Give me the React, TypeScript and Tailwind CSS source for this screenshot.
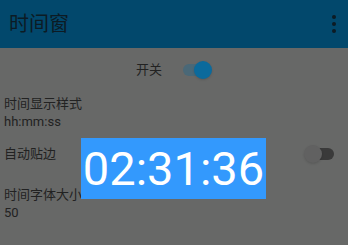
import React from "react";

export default function App() {
  const cjk = { fontFamily: '"Roboto", "Noto Sans CJK SC", sans-serif' };
  return (
    <div className="relative w-[348px] h-[245px] overflow-hidden bg-[#676867]" style={cjk}>
      <div className="h-12 bg-[#02486c] flex items-center justify-between pl-[9px] pr-[12px]">
        <span className="text-[20px] text-[#0c1b24] leading-none">时间窗</span>
        <div className="flex flex-col gap-[3px] items-center">
          <span className="w-[4px] h-[4px] rounded-full bg-[#0c1b24]" />
          <span className="w-[4px] h-[4px] rounded-full bg-[#0c1b24]" />
          <span className="w-[4px] h-[4px] rounded-full bg-[#0c1b24]" />
        </div>
      </div>
      <div className="flex items-center justify-center h-[44px]">
        <span className="text-[13px] text-[#222] mr-[21px]">开关</span>
        <div className="relative w-[29px] h-[20px] flex items-center">
          <div className="w-[26px] h-[12px] rounded-full bg-[#4a6877]" />
          <div className="absolute right-0 w-[18px] h-[18px] rounded-full bg-[#0b6a9c] shadow" />
        </div>
      </div>
      <div className="px-[4px] text-[13px] text-[#222] leading-[18px]">
        <div className="pt-[3px]">时间显示样式</div>
        <div>hh:mm:ss</div>
        <div className="flex items-center justify-between mt-[13px] pr-[10px]">
          <span>自动贴边</span>
          <div className="relative w-[30px] h-[20px] flex items-center">
            <div className="w-[26px] h-[12px] rounded-full bg-[#3a3a3a] ml-[4px]" />
            <div className="absolute left-0 top-[1px] w-[18px] h-[18px] rounded-full bg-[#616161] shadow" />
          </div>
        </div>
        <div className="mt-[22px]">时间字体大小</div>
        <div>50</div>
        <div className="mt-[22px]">时间背景颜色</div>
      </div>
      <div className="absolute left-[81px] top-[138px] w-[185px] h-[61px] bg-[#3399fd] flex items-center justify-center">
        <span className="text-white text-[47px] leading-none" style={{ fontFamily: "Roboto, sans-serif" }}>02:31:36</span>
      </div>
    </div>
  );
}
